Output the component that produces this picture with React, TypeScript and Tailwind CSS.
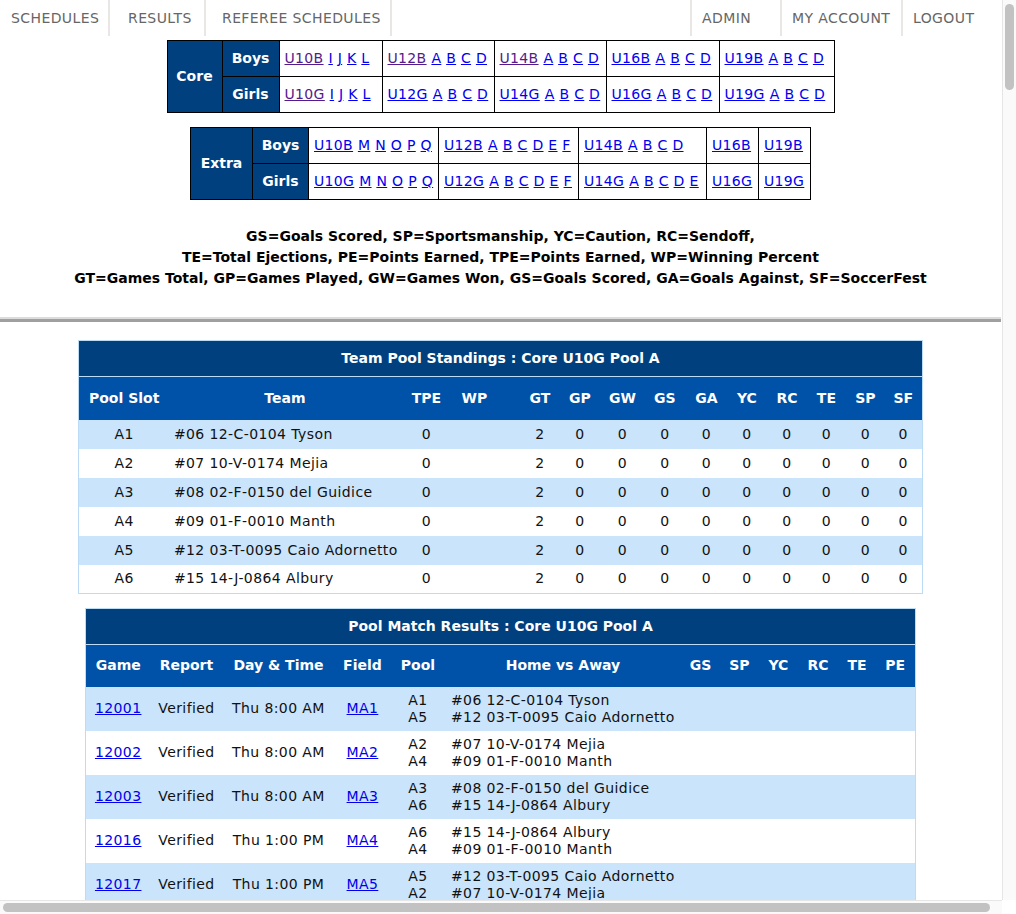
import React from 'react';

const FONT = { fontFamily: '"DejaVu Sans", Verdana, sans-serif' };

type Link = { text: string; visited?: boolean };

function LinkGroup({ links }: { links: Link[] }) {
  return (
    <>
      {links.map((l, i) => (
        <React.Fragment key={i}>
          {i > 0 && ' '}
          <a
            href="#"
            className={l.visited ? 'text-[#551a8b] underline' : 'text-[#0000ee] underline'}
          >
            {l.text}
          </a>
        </React.Fragment>
      ))}
    </>
  );
}

const mk = (head: string, letters: string, visited = false): Link[] => [
  { text: head, visited },
  ...letters.split(' ').filter(Boolean).map((t) => ({ text: t })),
];

type PoolTableProps = {
  label: string;
  labelWidth: number;
  sexWidth: number;
  widths: number[];
  boys: Link[][];
  girls: Link[][];
};

function PoolTable({ label, labelWidth, sexWidth, widths, boys, girls }: PoolTableProps) {
  const rows: [string, Link[][]][] = [
    ['Boys', boys],
    ['Girls', girls],
  ];
  return (
    <table className="mx-auto table-fixed border-collapse text-[14px]">
      <colgroup>
        <col style={{ width: labelWidth }} />
        <col style={{ width: sexWidth }} />
        {widths.map((w, i) => (
          <col key={i} style={{ width: w }} />
        ))}
      </colgroup>
      <tbody>
        {rows.map(([sex, cells], r) => (
          <tr key={sex} className="h-[36px]">
            {r === 0 && (
              <td
                rowSpan={2}
                className="border border-black bg-[#00407e] text-center font-bold text-white"
              >
                {label}
              </td>
            )}
            <td className="border border-black bg-[#00407e] text-center font-bold text-white">
              {sex}
            </td>
            {cells.map((links, i) => (
              <td
                key={i}
                className="border border-black bg-white pl-[5px] tracking-[0.35px] whitespace-nowrap"
              >
                <LinkGroup links={links} />
              </td>
            ))}
          </tr>
        ))}
      </tbody>
    </table>
  );
}

const teams = [
  ['A1', '#06 12-C-0104 Tyson'],
  ['A2', '#07 10-V-0174 Mejia'],
  ['A3', '#08 02-F-0150 del Guidice'],
  ['A4', '#09 01-F-0010 Manth'],
  ['A5', '#12 03-T-0095 Caio Adornetto'],
  ['A6', '#15 14-J-0864 Albury'],
];

const standingCols = [
  { h: 'Pool Slot', w: 90 },
  { h: 'Team', w: 232 },
  { h: 'TPE', w: 51 },
  { h: 'WP', w: 45 },
  { h: 'GT', w: 62, pad: true },
  { h: 'GP', w: 42 },
  { h: 'GW', w: 43 },
  { h: 'GS', w: 42 },
  { h: 'GA', w: 41 },
  { h: 'YC', w: 40 },
  { h: 'RC', w: 40 },
  { h: 'TE', w: 39 },
  { h: 'SP', w: 39 },
  { h: 'SF', w: 37 },
];

function Standings() {
  return (
    <table className="mx-auto w-[843px] table-fixed border-collapse border border-[#bcdcf5] text-[14px] text-[#111]">
      <colgroup>
        {standingCols.map((c) => (
          <col key={c.h} style={{ width: c.w }} />
        ))}
      </colgroup>
      <thead>
        <tr className="h-[36px] border-b border-[#bcdcf5] bg-[#00407e]">
          <th colSpan={14} className="text-center font-bold text-white">
            Team Pool Standings : Core U10G Pool A
          </th>
        </tr>
        <tr className="h-[43px] bg-[#0051a8] text-white">
          {standingCols.map((c) => (
            <th
              key={c.h}
              className={c.pad ? 'pl-[24px] text-center font-bold' : 'text-center font-bold'}
            >
              {c.h}
            </th>
          ))}
        </tr>
      </thead>
      <tbody className="tracking-[0.4px]">
        {teams.map(([slot, team], i) => (
          <tr key={slot} className={i % 2 === 0 ? 'h-[29px] bg-[#c9e4fb]' : 'h-[29px] bg-white'}>
            <td className="text-center">{slot}</td>
            <td className="pl-[5px] whitespace-nowrap">{team}</td>
            <td className="text-center">0</td>
            <td />
            <td className="pl-[24px] text-center">2</td>
            {Array.from({ length: 9 }).map((_, k) => (
              <td key={k} className="text-center">
                0
              </td>
            ))}
          </tr>
        ))}
      </tbody>
    </table>
  );
}

const matches = [
  ['12001', 'Thu 8:00 AM', 'MA1', 'A1', 'A5'],
  ['12002', 'Thu 8:00 AM', 'MA2', 'A2', 'A4'],
  ['12003', 'Thu 8:00 AM', 'MA3', 'A3', 'A6'],
  ['12016', 'Thu 1:00 PM', 'MA4', 'A6', 'A4'],
  ['12017', 'Thu 1:00 PM', 'MA5', 'A5', 'A2'],
  ['12018', 'Thu 1:00 PM', 'MA6', 'A3', 'A1'],
];

const teamBySlot = Object.fromEntries(teams);

const matchCols = [
  { h: 'Game', w: 64 },
  { h: 'Report', w: 73 },
  { h: 'Day & Time', w: 111 },
  { h: 'Field', w: 57 },
  { h: 'Pool', w: 54 },
  { h: 'Home vs Away', w: 236 },
  { h: 'GS', w: 39 },
  { h: 'SP', w: 39 },
  { h: 'YC', w: 39 },
  { h: 'RC', w: 40 },
  { h: 'TE', w: 38 },
  { h: 'PE', w: 39 },
];

function MatchResults() {
  return (
    <table className="mx-auto w-[829px] table-fixed border-collapse border border-[#bcdcf5] text-[14px] text-[#111]">
      <colgroup>
        {matchCols.map((c) => (
          <col key={c.h} style={{ width: c.w }} />
        ))}
      </colgroup>
      <thead>
        <tr className="h-[36px] border-b border-[#bcdcf5] bg-[#00407e]">
          <th colSpan={12} className="text-center font-bold text-white">
            Pool Match Results : Core U10G Pool A
          </th>
        </tr>
        <tr className="h-[42px] bg-[#0051a8] text-white">
          {matchCols.map((c) => (
            <th key={c.h} className="text-center font-bold whitespace-nowrap">
              {c.h}
            </th>
          ))}
        </tr>
      </thead>
      <tbody className="tracking-[0.4px]">
        {matches.map(([game, time, field, home, away], i) => (
          <tr key={game} className={i % 2 === 0 ? 'h-[44px] bg-[#c9e4fb]' : 'h-[44px] bg-white'}>
            <td className="text-center">
              <a href="#" className="text-[#0000ee] underline">
                {game}
              </a>
            </td>
            <td className="text-center">Verified</td>
            <td className="text-center whitespace-nowrap">{time}</td>
            <td className="text-center">
              <a href="#" className="text-[#0000ee] underline">
                {field}
              </a>
            </td>
            <td className="text-center leading-[17px]">
              {home}
              <br />
              {away}
            </td>
            <td className="pl-[6px] leading-[17px] whitespace-nowrap">
              {teamBySlot[home]}
              <br />
              {teamBySlot[away]}
            </td>
            {Array.from({ length: 6 }).map((_, k) => (
              <td key={k} />
            ))}
          </tr>
        ))}
      </tbody>
    </table>
  );
}

function NavItem({ label, className }: { label: string; className: string }) {
  return (
    <a
      href="#"
      className={`flex h-[36px] items-center text-[14px] tracking-[0.4px] text-[#666] ${className}`}
    >
      {label}
    </a>
  );
}

export default function App() {
  return (
    <div className="flex h-[914px] w-[1016px] flex-col overflow-hidden bg-white text-black" style={FONT}>
      <div className="flex h-[900px]">
        <main className="h-[900px] w-[1002px] overflow-hidden">
          <div className="w-[1001px]">
            <nav className="flex justify-between">
              <div className="flex">
                <NavItem label="SCHEDULES" className="w-[110px] border-r-2 border-[#e9e6e6] pl-[11px]" />
                <NavItem label="RESULTS" className="w-[96px] border-r-2 border-[#e9e6e6] pl-[18px]" />
                <NavItem label="REFEREE SCHEDULES" className="w-[186px] border-r-2 border-[#e9e6e6] pl-[16px]" />
              </div>
              <div className="flex">
                <NavItem label="ADMIN" className="w-[90px] border-l-2 border-[#e9e6e6] pl-[10px]" />
                <NavItem label="MY ACCOUNT" className="w-[121px] border-l-2 border-[#e9e6e6] pl-[10px]" />
                <NavItem label="LOGOUT" className="w-[100px] border-l-2 border-[#e9e6e6] pl-[10px]" />
              </div>
            </nav>

            <div className="mt-[4px]">
              <PoolTable
                label="Core"
                labelWidth={55}
                sexWidth={57}
                widths={[103, 112, 112, 113, 115]}
                boys={[
                  mk('U10B', 'I J K L', true),
                  mk('U12B', 'A B C D', true),
                  mk('U14B', 'A B C D', true),
                  mk('U16B', 'A B C D'),
                  mk('U19B', 'A B C D'),
                ]}
                girls={[
                  mk('U10G', 'I J K L', true),
                  mk('U12G', 'A B C D'),
                  mk('U14G', 'A B C D'),
                  mk('U16G', 'A B C D'),
                  mk('U19G', 'A B C D'),
                ]}
              />
            </div>

            <div className="mt-[14px]">
              <PoolTable
                label="Extra"
                labelWidth={62}
                sexWidth={56}
                widths={[130, 140, 128, 52, 52]}
                boys={[
                  mk('U10B', 'M N O P Q'),
                  mk('U12B', 'A B C D E F'),
                  mk('U14B', 'A B C D'),
                  mk('U16B', ''),
                  mk('U19B', ''),
                ]}
                girls={[
                  mk('U10G', 'M N O P Q'),
                  mk('U12G', 'A B C D E F'),
                  mk('U14G', 'A B C D E'),
                  mk('U16G', ''),
                  mk('U19G', ''),
                ]}
              />
            </div>

            <div className="mt-[26px] text-center text-[14px] leading-[21px] font-bold">
              <p>GS=Goals Scored, SP=Sportsmanship, YC=Caution, RC=Sendoff,</p>
              <p>TE=Total Ejections, PE=Points Earned, TPE=Points Earned, WP=Winning Percent</p>
              <p>GT=Games Total, GP=Games Played, GW=Games Won, GS=Goals Scored, GA=Goals Against, SF=SoccerFest</p>
            </div>

            <div className="mt-[28px] h-[5px] border-t-2 border-b-[3px] border-t-[#dcdcdc] border-b-[#a0a0a0]" />

            <div className="mt-[18px]">
              <Standings />
            </div>

            <div className="mt-[14px]">
              <MatchResults />
            </div>
          </div>
        </main>
        {/* vertical scrollbar */}
        <div className="w-[14px] border-l border-[#e6e6e6] bg-[#fafafa] px-[2px] pt-[4px]">
          <div className="h-[86px] rounded-full bg-[#c2c2c2]" />
        </div>
      </div>
      {/* horizontal scrollbar */}
      <div className="flex h-[14px]">
        <div className="flex-1 border-t border-[#e6e6e6] bg-[#fafafa] py-[2px] pl-[3px] pr-[12px]">
          <div className="h-[9px] rounded-full bg-[#c2c2c2]" />
        </div>
        <div className="w-[14px] bg-white" />
      </div>
    </div>
  );
}
